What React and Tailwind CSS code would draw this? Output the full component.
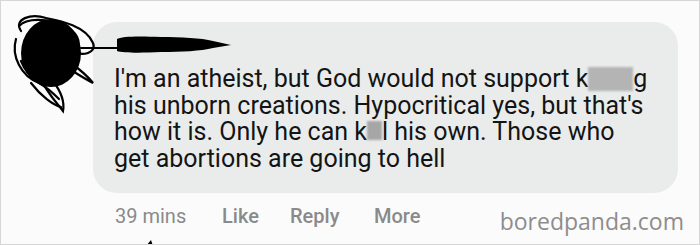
export default function App() {
  return (
    <div className="relative w-[700px] h-[245px] overflow-hidden bg-[#fbfbfb] border border-[#d6d6d6] font-['Roboto',sans-serif]">
      <div className="flex pt-[21px]">
        <div className="w-[92px] shrink-0" />
        <div className="flex flex-col">
          <div className="w-[585px] h-[171px] rounded-[24px] bg-[#eaecec] pl-[21px] pt-[44px] text-[25px] leading-[26.7px] text-[#141414]">
            <p>
              I'm an atheist, but God would not support k
              <span className="inline-block w-[45px] h-[24px] align-[-4px] bg-[#b4b4b4] blur-[1px]" />
              g
            </p>
            <p>his unborn creations. Hypocritical yes, but that's</p>
            <p>
              how it is. Only he can k
              <span className="inline-block w-[15px] h-[19px] align-[0px] bg-[#a6a6a6] blur-[1px]" />
              l his own. Those who
            </p>
            <p>get abortions are going to hell</p>
          </div>
          <div className="flex items-start mt-[11px] pl-[22px] text-[20px] leading-[24px]">
            <span className="text-[#8a8a8a] w-[107px]">39 mins</span>
            <span className="text-[#8a8a8a] font-medium w-[68px]">Like</span>
            <span className="text-[#8a8a8a] font-medium w-[84px]">Reply</span>
            <span className="text-[#8a8a8a] font-medium">More</span>
            <span className="ml-auto mt-[3px] mr-[-6px] text-[23px] leading-[28px] text-[#8d8d8d] font-['Open_Sans',sans-serif]">
              boredpanda.com
            </span>
          </div>
        </div>
      </div>

      {/* scribbled-out avatar and name */}
      <svg
        className="absolute left-0 top-0"
        width="240"
        height="245"
        viewBox="0 0 240 245"
      >
        <ellipse cx="50" cy="52" rx="30" ry="34" fill="#000" />
        <g fill="none" stroke="#000" strokeWidth="2.2" strokeLinecap="round">
          <path d="M20 30 C12 18 30 12 45 17 C60 20 85 25 92 42 C96 52 82 56 70 50" />
          <path d="M18 25 C26 16 48 18 62 24 C75 30 82 40 75 52" />
          <path d="M15 38 C10 55 20 75 38 82 C45 86 52 92 58 98" />
          <path d="M40 78 C46 92 56 102 62 110 C64 100 58 88 52 80" />
          <path d="M30 82 C40 95 52 104 60 106" />
          <path d="M65 66 C75 72 84 78 92 82 C86 74 78 68 70 62" />
          <path d="M20 60 C24 70 30 76 36 80" />
          <path d="M80 47 L118 47" />
        </g>
        <path
          d="M116 38 C120 35 140 35 160 36 C180 36 200 37 212 40 L230 44 L212 47 C200 50 180 51 160 51 C140 52 122 52 116 50 Z"
          fill="#000"
        />
        <path d="M145 245 L150 239 L152 245 Z" fill="#000" />
      </svg>
    </div>
  );
}
